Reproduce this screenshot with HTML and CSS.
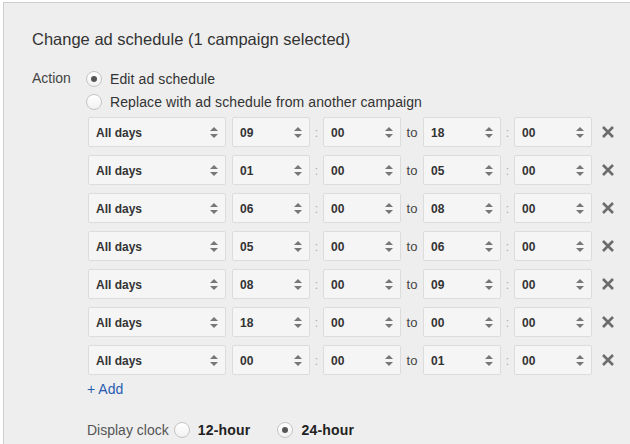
FILE: index.html
```html
<!DOCTYPE html>
<html>
<head>
<meta charset="utf-8">
<link rel="stylesheet" href="styles.css">
</head>
<body>
<div class="panel">
  <h1 class="title">Change ad schedule (1 campaign selected)</h1>
  <div class="action">
    <div class="label">Action</div>
    <div class="content">
      <div class="options">
        <label class="opt"><span class="radio checked"></span>Edit ad schedule</label>
        <label class="opt"><span class="radio"></span>Replace with ad schedule from another campaign</label>
      </div>
      <div class="rows">
        <div class="row">
          <div class="sel day">All days<span class="arr"></span></div>
          <div class="sel t">09<span class="arr"></span></div><span class="colon">:</span>
          <div class="sel t">00<span class="arr"></span></div><span class="to">to</span>
          <div class="sel t">18<span class="arr"></span></div><span class="colon">:</span>
          <div class="sel t">00<span class="arr"></span></div>
          <svg class="x" viewBox="0 0 14 14"><path d="M2 2L12 12M12 2L2 12"/></svg>
        </div>
        <div class="row">
          <div class="sel day">All days<span class="arr"></span></div>
          <div class="sel t">01<span class="arr"></span></div><span class="colon">:</span>
          <div class="sel t">00<span class="arr"></span></div><span class="to">to</span>
          <div class="sel t">05<span class="arr"></span></div><span class="colon">:</span>
          <div class="sel t">00<span class="arr"></span></div>
          <svg class="x" viewBox="0 0 14 14"><path d="M2 2L12 12M12 2L2 12"/></svg>
        </div>
        <div class="row">
          <div class="sel day">All days<span class="arr"></span></div>
          <div class="sel t">06<span class="arr"></span></div><span class="colon">:</span>
          <div class="sel t">00<span class="arr"></span></div><span class="to">to</span>
          <div class="sel t">08<span class="arr"></span></div><span class="colon">:</span>
          <div class="sel t">00<span class="arr"></span></div>
          <svg class="x" viewBox="0 0 14 14"><path d="M2 2L12 12M12 2L2 12"/></svg>
        </div>
        <div class="row">
          <div class="sel day">All days<span class="arr"></span></div>
          <div class="sel t">05<span class="arr"></span></div><span class="colon">:</span>
          <div class="sel t">00<span class="arr"></span></div><span class="to">to</span>
          <div class="sel t">06<span class="arr"></span></div><span class="colon">:</span>
          <div class="sel t">00<span class="arr"></span></div>
          <svg class="x" viewBox="0 0 14 14"><path d="M2 2L12 12M12 2L2 12"/></svg>
        </div>
        <div class="row">
          <div class="sel day">All days<span class="arr"></span></div>
          <div class="sel t">08<span class="arr"></span></div><span class="colon">:</span>
          <div class="sel t">00<span class="arr"></span></div><span class="to">to</span>
          <div class="sel t">09<span class="arr"></span></div><span class="colon">:</span>
          <div class="sel t">00<span class="arr"></span></div>
          <svg class="x" viewBox="0 0 14 14"><path d="M2 2L12 12M12 2L2 12"/></svg>
        </div>
        <div class="row">
          <div class="sel day">All days<span class="arr"></span></div>
          <div class="sel t">18<span class="arr"></span></div><span class="colon">:</span>
          <div class="sel t">00<span class="arr"></span></div><span class="to">to</span>
          <div class="sel t">00<span class="arr"></span></div><span class="colon">:</span>
          <div class="sel t">00<span class="arr"></span></div>
          <svg class="x" viewBox="0 0 14 14"><path d="M2 2L12 12M12 2L2 12"/></svg>
        </div>
        <div class="row">
          <div class="sel day">All days<span class="arr"></span></div>
          <div class="sel t">00<span class="arr"></span></div><span class="colon">:</span>
          <div class="sel t">00<span class="arr"></span></div><span class="to">to</span>
          <div class="sel t">01<span class="arr"></span></div><span class="colon">:</span>
          <div class="sel t">00<span class="arr"></span></div>
          <svg class="x" viewBox="0 0 14 14"><path d="M2 2L12 12M12 2L2 12"/></svg>
        </div>
      </div>
      <a class="add">+ Add</a>
      <div class="clock">
        <span class="clabel">Display clock</span>
        <label class="copt"><span class="radio"></span><b>12-hour</b></label>
        <label class="copt"><span class="radio checked"></span><b>24-hour</b></label>
      </div>
    </div>
  </div>
</div>
</body>
</html>
```
FILE: styles.css
```css
html, body {
  margin: 0;
  padding: 0;
  background: #ffffff;
  font-family: "Liberation Sans", Arial, sans-serif;
  color: #333;
  overflow: hidden;
}
.panel {
  margin: 2px 0 0 3px;
  width: 627px;
  height: 442px;
  background: #eeeeee;
  border-top: 1px solid #cfcfcf;
  border-left: 1px solid #cfcfcf;
  box-sizing: border-box;
  padding: 26px 0 0 28px;
}
.title {
  margin: 0;
  font-size: 16.5px;
  font-weight: normal;
  line-height: 20px;
  color: #333;
}
.action {
  display: flex;
  margin-top: 18px;
}
.label {
  width: 54px;
  font-size: 14px;
  line-height: 23px;
  color: #444;
}
.content {
  display: flex;
  flex-direction: column;
}
.options {
  display: flex;
  flex-direction: column;
}
.opt {
  display: flex;
  align-items: center;
  height: 23px;
  font-size: 14px;
  letter-spacing: 0.1px;
  color: #333;
}
.radio {
  width: 14px;
  height: 14px;
  border: 1px solid #c4c4c4;
  border-radius: 50%;
  background: linear-gradient(#ffffff, #f2f2f2);
  box-sizing: content-box;
  display: inline-flex;
  align-items: center;
  justify-content: center;
  margin-right: 8px;
  flex: none;
}
.radio.checked::after {
  content: "";
  width: 6px;
  height: 6px;
  border-radius: 50%;
  background: #555;
}
.rows {
  display: flex;
  flex-direction: column;
  gap: 8px;
  margin-top: 4px;
  margin-left: 2px;
}
.row {
  display: flex;
  align-items: center;
  height: 30px;
}
.sel {
  height: 30px;
  box-sizing: border-box;
  border: 1px solid #dcdcdc;
  border-radius: 2px;
  background: #f5f5f5;
  font-size: 12px;
  font-weight: bold;
  color: #333;
  display: flex;
  align-items: center;
  justify-content: space-between;
  padding: 1px 7px 0 7px;
}
.day {
  width: 138px;
  margin-right: 6px;
}
.t {
  width: 78px;
}
.arr {
  width: 8px;
  height: 11px;
  position: relative;
  flex: none;
}
.arr::before, .arr::after {
  content: "";
  position: absolute;
  left: 0;
  border-left: 4px solid transparent;
  border-right: 4px solid transparent;
}
.arr::before {
  top: 0;
  border-bottom: 4px solid #777;
}
.arr::after {
  bottom: 0;
  border-top: 4px solid #777;
}
.colon {
  width: 13px;
  text-align: center;
  color: #aaa;
  font-size: 12px;
  line-height: 1;
  padding-top: 2px;
}
.to {
  width: 22px;
  text-align: center;
  font-size: 13px;
  color: #444;
}
.x {
  width: 14px;
  height: 14px;
  margin-left: 9px;
  fill: none;
  stroke: #6b6b6b;
  stroke-width: 2.6;
}
.add {
  margin-top: 6px;
  margin-left: 1px;
  font-size: 14px;
  line-height: 16px;
  color: #2a5db0;
}
.clock {
  display: flex;
  align-items: center;
  margin-top: 23px;
  margin-left: 1px;
  height: 20px;
  font-size: 14px;
}
.clabel {
  color: #555;
  margin-right: 5px;
}
.copt {
  display: flex;
  align-items: center;
  margin-right: 27px;
}
.copt b {
  color: #222;
  letter-spacing: 0.2px;
}
```
